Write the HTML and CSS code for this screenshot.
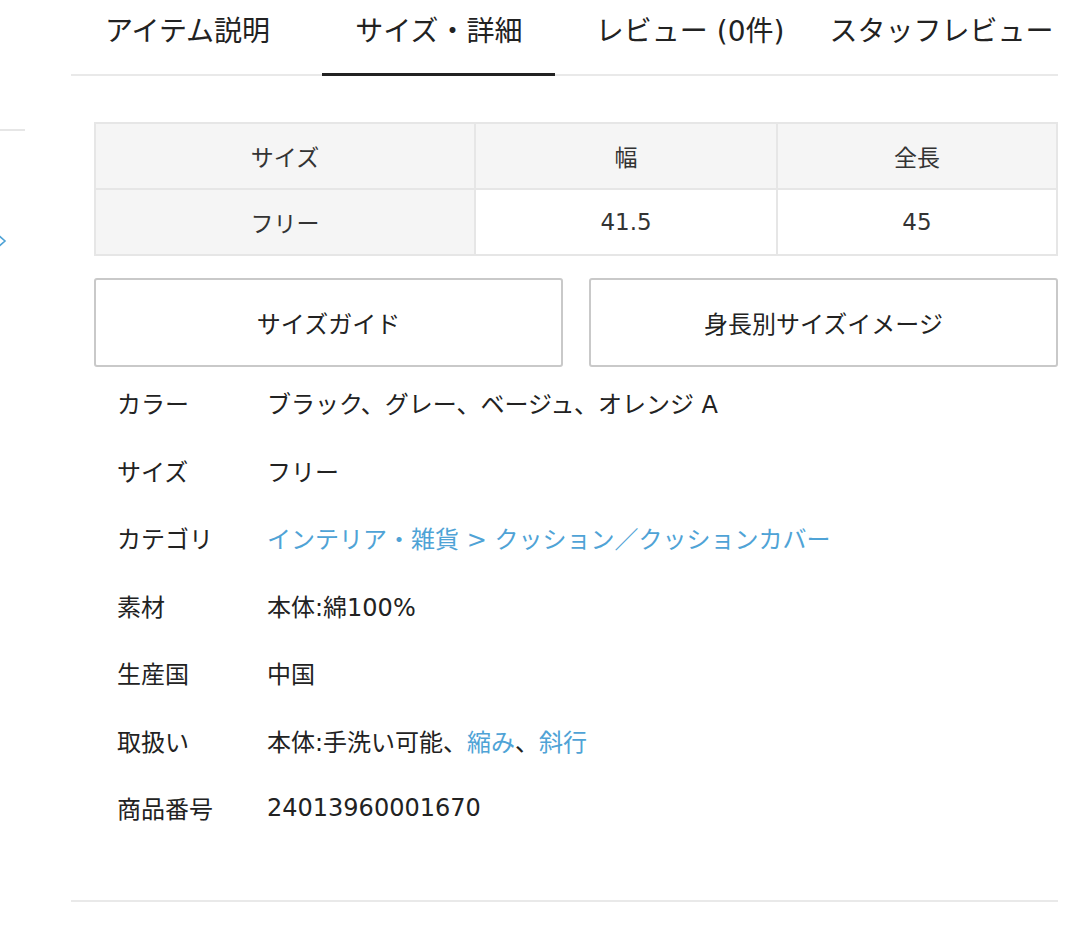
FILE: index.html
```html
<!DOCTYPE html>
<html lang="ja">
<head>
  <meta charset="UTF-8">
  <meta name="viewport" content="width=device-width, initial-scale=1.0">
  <title>サイズ・詳細</title>
  <link rel="stylesheet" href="styles.css">
</head>
<body>
  <div class="page">
    <!-- Side (cut off) -->
    <div class="side">
      <div class="side-line"></div>
      <svg class="side-arrow" width="8" height="16" viewBox="0 0 8 16">
        <polyline points="-3,1 5,8 -3,15" fill="none" stroke="#4fa3d6" stroke-width="1.6"/>
      </svg>
    </div>

    <!-- Main -->
    <div class="main">
      <div class="tabs">
        <div class="tab">アイテム説明</div>
        <div class="tab active">サイズ・詳細</div>
        <div class="tab">レビュー (0件)</div>
        <div class="tab">スタッフレビュー</div>
      </div>

      <div class="content">
        <table class="size-table">
          <tr>
            <th class="c1">サイズ</th>
            <th class="c2">幅</th>
            <th class="c3">全長</th>
          </tr>
          <tr>
            <th>フリー</th>
            <td>41.5</td>
            <td>45</td>
          </tr>
        </table>

        <div class="buttons">
          <button>サイズガイド</button>
          <button>身長別サイズイメージ</button>
        </div>

        <dl class="specs">
          <div class="row"><dt>カラー</dt><dd>ブラック、グレー、ベージュ、オレンジ A</dd></div>
          <div class="row"><dt>サイズ</dt><dd>フリー</dd></div>
          <div class="row"><dt>カテゴリ</dt><dd><a href="#">インテリア・雑貨</a> <a href="#">&gt;</a> <a href="#">クッション／クッションカバー</a></dd></div>
          <div class="row"><dt>素材</dt><dd>本体:綿100%</dd></div>
          <div class="row"><dt>生産国</dt><dd>中国</dd></div>
          <div class="row"><dt>取扱い</dt><dd>本体:手洗い可能、<a href="#">縮み</a>、<a href="#">斜行</a></dd></div>
          <div class="row"><dt>商品番号</dt><dd>24013960001670</dd></div>
        </dl>
      </div>

      <div class="footer-line"></div>
    </div>
  </div>
</body>
</html>
```

FILE: styles.css
```css
body {
  margin: 0;
  padding: 0;
  background: #fff;
  color: #222;
  font-family: "DejaVu Sans", "Noto Sans CJK JP", sans-serif;
}

.page {
  display: flex;
}

/* side column, mostly off screen */
.side {
  width: 25px;
  padding-top: 129px;
}

.side-line {
  height: 2px;
  background: #e6e6e6;
}

.side-arrow {
  display: block;
  margin-top: 102px;
}

.main {
  width: 987px;
  margin-left: 46px;
}

/* tabs */
.tabs {
  display: flex;
  justify-content: space-between;
  border-bottom: 2px solid #e9e9e9;
}

.tab {
  width: 233px;
  height: 76px;
  margin-bottom: -2px;
  padding-top: 12px;
  box-sizing: border-box;
  text-align: center;
  font-size: 28px;
  line-height: 40px;
  white-space: nowrap;
  color: #222;
}

.tab.active {
  box-shadow: inset 0 -3px 0 #222;
}

.content {
  padding: 46px 0 0 23px;
}

/* size table */
.size-table {
  width: 964px;
  border-collapse: collapse;
  font-size: 23px;
  color: #333;
}

.size-table th,
.size-table td {
  height: 64px;
  border: 2px solid #e6e6e6;
  text-align: center;
  font-weight: normal;
  padding: 0;
}

.size-table th {
  background: #f5f5f5;
}

.size-table .c1 {
  width: 378px;
}

.size-table .c2 {
  width: 300px;
}

/* buttons */
.buttons {
  display: flex;
  gap: 26px;
  margin-top: 22px;
}

.buttons button {
  flex: 1;
  height: 89px;
  background: #fff;
  border: 2px solid #c9c9c9;
  border-radius: 3px;
  font-family: inherit;
  font-size: 24px;
  color: #222;
  cursor: pointer;
}

/* specs */
.specs {
  margin: 2px 0 0;
  padding-left: 23px;
  font-size: 24px;
}

.specs .row {
  display: flex;
  align-items: center;
  height: 67.5px;
}

.specs dt {
  width: 150px;
}

.specs dd {
  margin: 0;
}

.specs a {
  color: #4fa3d6;
  text-decoration: none;
}

.footer-line {
  margin-top: 58px;
  height: 2px;
  background: #e9e9e9;
}
```
